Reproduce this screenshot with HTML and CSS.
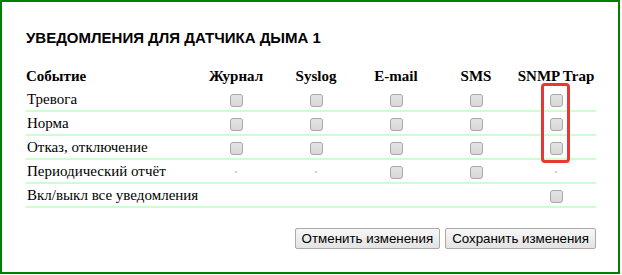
FILE: index.html
```html
<!DOCTYPE html>
<html lang="ru">
<head>
    <meta charset="UTF-8">
    <meta name="viewport" content="width=device-width, initial-scale=1.0">
    <title>Уведомления для датчика дыма 1</title>
    <link rel="stylesheet" href="styles.css">
</head>
<body>
    <div class="panel">
        <h2 class="title">УВЕДОМЛЕНИЯ ДЛЯ ДАТЧИКА ДЫМА 1</h2>

        <div class="table-wrap">
            <table class="notify">
                <thead>
                    <tr>
                        <th class="event">Событие</th>
                        <th>Журнал</th>
                        <th>Syslog</th>
                        <th>E-mail</th>
                        <th>SMS</th>
                        <th>SNMP Trap</th>
                    </tr>
                </thead>
                <tbody>
                    <tr>
                        <td class="event">Тревога</td>
                        <td><input type="checkbox"></td>
                        <td><input type="checkbox"></td>
                        <td><input type="checkbox"></td>
                        <td><input type="checkbox"></td>
                        <td><input type="checkbox"></td>
                    </tr>
                    <tr>
                        <td class="event">Норма</td>
                        <td><input type="checkbox"></td>
                        <td><input type="checkbox"></td>
                        <td><input type="checkbox"></td>
                        <td><input type="checkbox"></td>
                        <td><input type="checkbox"></td>
                    </tr>
                    <tr>
                        <td class="event">Отказ, отключение</td>
                        <td><input type="checkbox"></td>
                        <td><input type="checkbox"></td>
                        <td><input type="checkbox"></td>
                        <td><input type="checkbox"></td>
                        <td><input type="checkbox"></td>
                    </tr>
                    <tr>
                        <td class="event">Периодический отчёт</td>
                        <td><span class="dot"></span></td>
                        <td><span class="dot"></span></td>
                        <td><input type="checkbox"></td>
                        <td><input type="checkbox"></td>
                        <td><span class="dot"></span></td>
                    </tr>
                    <tr>
                        <td class="event">Вкл/выкл все уведомления</td>
                        <td></td>
                        <td></td>
                        <td></td>
                        <td></td>
                        <td><input type="checkbox"></td>
                    </tr>
                </tbody>
            </table>
            <!-- highlight around the SNMP Trap column -->
            <div class="highlight"></div>
        </div>

        <div class="actions">
            <button type="button">Отменить изменения</button>
            <button type="button">Сохранить изменения</button>
        </div>
    </div>
</body>
</html>
```

FILE: styles.css
```css
body {
    margin: 0;
    background: #fff;
}
.panel {
    box-sizing: border-box;
    width: 620px;
    height: 274px;
    border: 2px solid #008000;
    padding: 27px 24px 0 24px;
}
.title {
    margin: 0;
    font-family: "Liberation Sans", Arial, sans-serif;
    font-size: 15px;
    line-height: 17px;
    font-weight: bold;
    color: #000;
}
.table-wrap {
    position: relative;
    width: 570px;
    margin-top: 22px;
}
.notify {
    width: 570px;
    border-collapse: collapse;
    table-layout: fixed;
    font-family: "Liberation Serif", "Times New Roman", serif;
    font-size: 15px;
    color: #000;
}
.notify th {
    height: 20px;
    padding: 0;
    line-height: 17px;
    vertical-align: top;
    text-align: center;
    font-weight: bold;
    width: 80px;
    white-space: nowrap;
}
.notify th.event {
    width: 170px;
    text-align: left;
}
.notify td {
    height: 22px;
    padding: 0;
    line-height: 17px;
    text-align: center;
    vertical-align: middle;
    border-bottom: 2px solid #ccffcc;
}
.notify td.event {
    text-align: left;
    padding-left: 1px;
    white-space: nowrap;
}
.notify input[type="checkbox"] {
    -webkit-appearance: none;
    appearance: none;
    box-sizing: border-box;
    width: 13px;
    height: 13px;
    margin: 0;
    display: inline-block;
    vertical-align: middle;
    border: 1px solid #a8a8a8;
    border-radius: 3px;
    background: linear-gradient(#e4e4e4, #d8d8d8);
}
.dot {
    display: inline-block;
    width: 2px;
    height: 2px;
    background: #d0d0d0;
    vertical-align: middle;
}
.highlight {
    position: absolute;
    left: 515px;
    top: 15px;
    width: 23px;
    height: 74px;
    border: 3px solid #e53935;
    border-radius: 4px;
}
.actions {
    width: 570px;
    margin-top: 20px;
    display: flex;
    justify-content: flex-end;
    gap: 5px;
}
.actions button {
    height: 21px;
    padding: 0 6px;
    font-family: "Liberation Sans", Arial, sans-serif;
    font-size: 13.33px;
    color: #000;
    border: 1px solid #a9a9a9;
    border-radius: 2px;
    background: linear-gradient(#f7f7f7, #e3e3e3);
}
```
